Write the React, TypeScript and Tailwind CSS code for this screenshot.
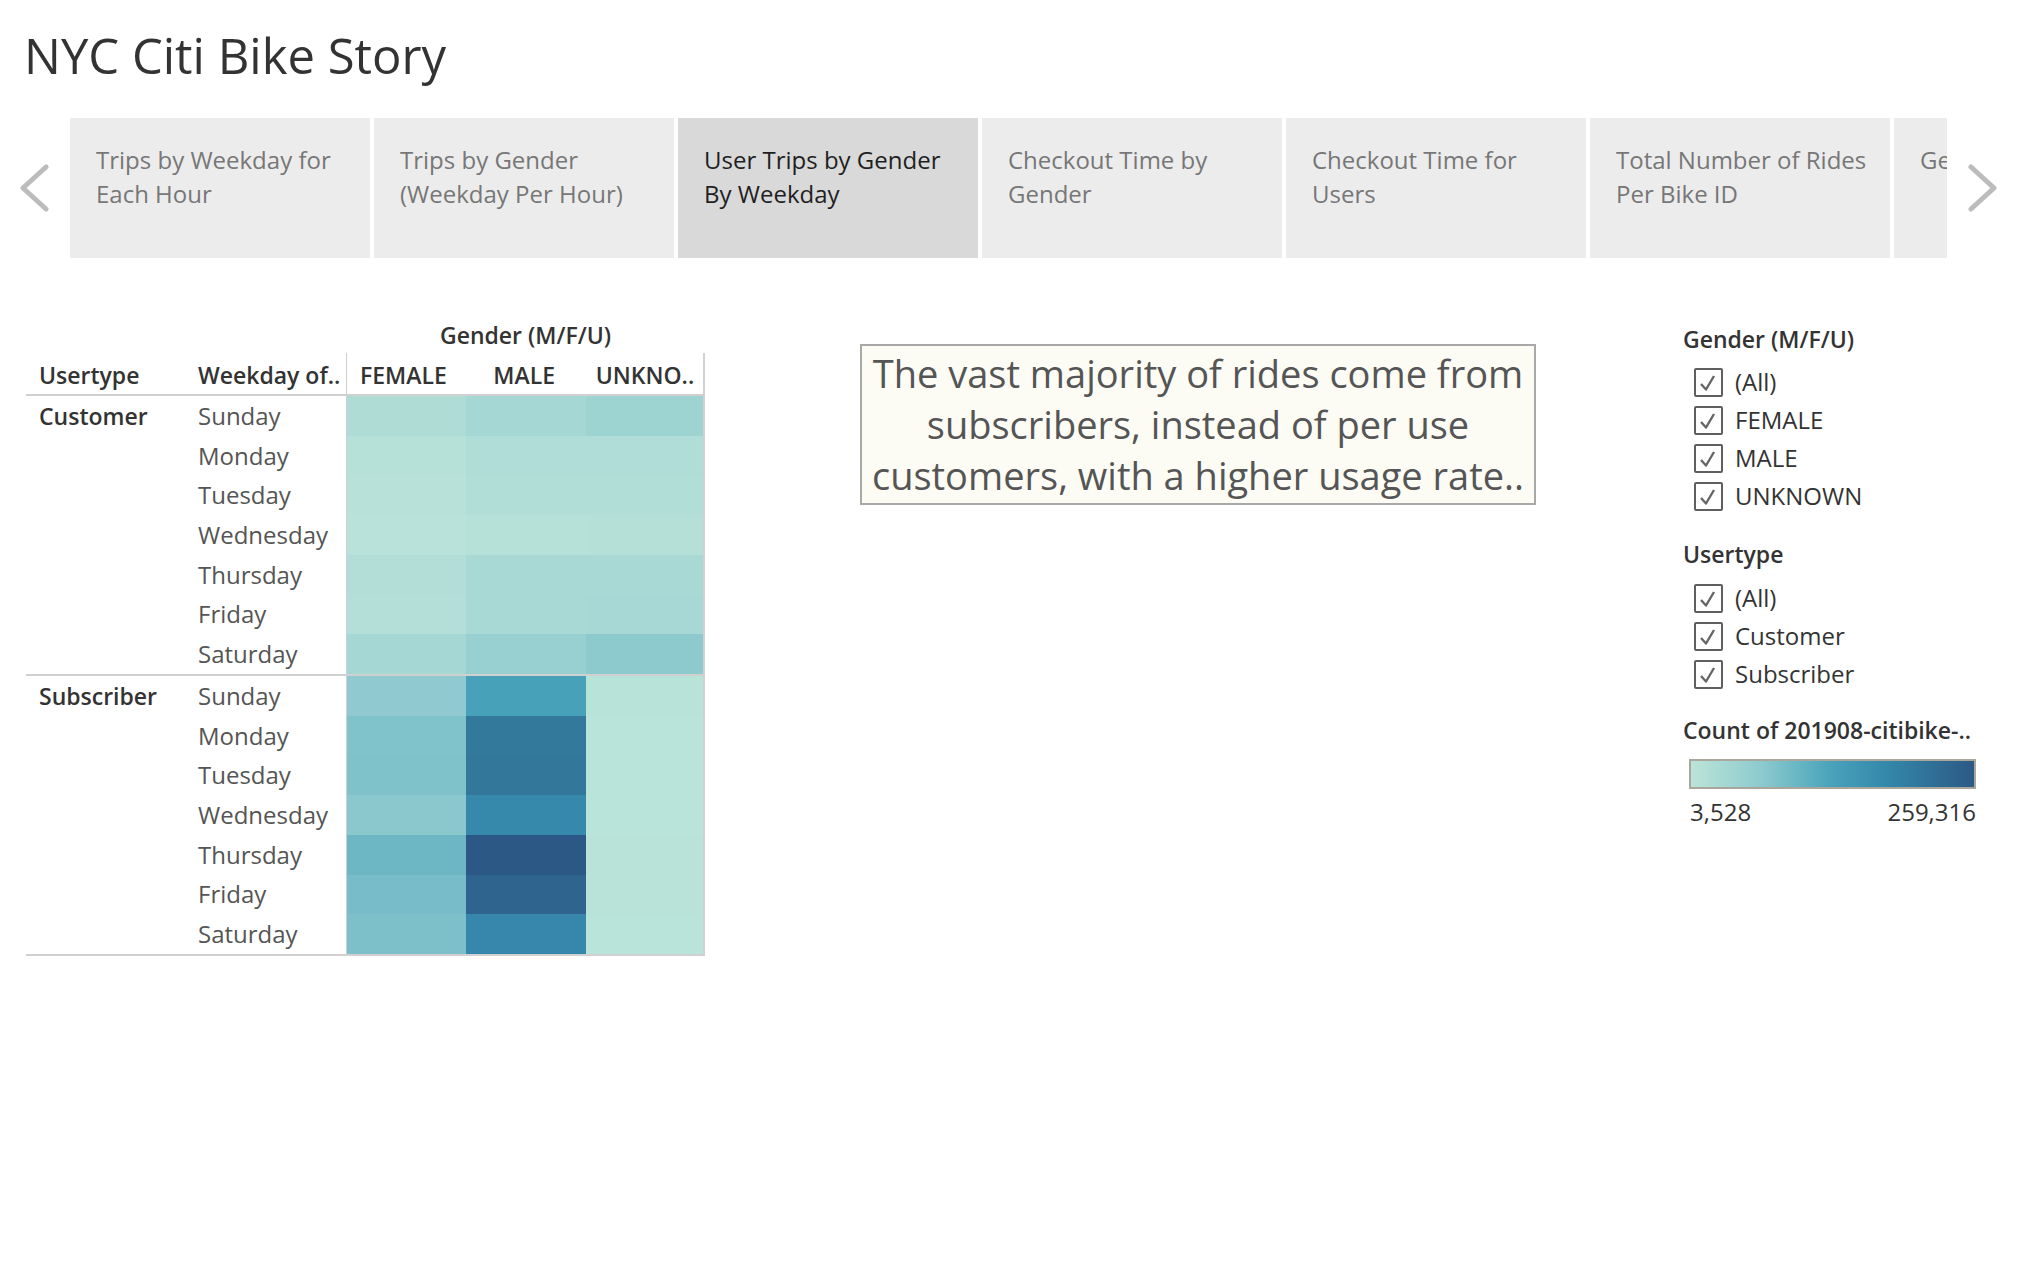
const tabs = [
  ["Trips by Weekday for", "Each Hour"],
  ["Trips by Gender", "(Weekday Per Hour)"],
  ["User Trips by Gender", "By Weekday"],
  ["Checkout Time by", "Gender"],
  ["Checkout Time for", "Users"],
  ["Total Number of Rides", "Per Bike ID"],
  ["Gender Trips", ""],
];

const days = ["Sunday", "Monday", "Tuesday", "Wednesday", "Thursday", "Friday", "Saturday"];

// colors per weekday: FEMALE, MALE, UNKNOWN
const groups: { name: string; cells: string[][] }[] = [
  {
    name: "Customer",
    cells: [
      ["#b0dcd6", "#a5d8d4", "#9dd4d2"],
      ["#b6e1d8", "#b0ddd7", "#b0ddd7"],
      ["#b8e2d9", "#b2ded8", "#b2ded8"],
      ["#b9e3da", "#b6e1d9", "#b4e0d8"],
      ["#b3ded7", "#a9d9d5", "#a8d9d5"],
      ["#b4dfd8", "#a9d9d5", "#a7d8d5"],
      ["#a5d7d4", "#98d0d1", "#8ccacd"],
    ],
  },
  {
    name: "Subscriber",
    cells: [
      ["#90cad0", "#47a1b9", "#b8e3d9"],
      ["#80c3cb", "#33799c", "#b9e4d9"],
      ["#80c2ca", "#33789b", "#b9e4d9"],
      ["#8bc8ce", "#3689aa", "#b9e4d9"],
      ["#6db7c5", "#2c5885", "#b9e3d9"],
      ["#77bcc8", "#2e648d", "#b9e3d9"],
      ["#7dc0ca", "#3787ad", "#b9e4d9"],
    ],
  },
];

function Chevron({ dir }: { dir: "left" | "right" }) {
  return (
    <svg width="29" height="48" viewBox="0 0 29 48" className="shrink-0">
      <polyline
        points={dir === "left" ? "26,3 3,24 26,45" : "3,3 26,24 3,45"}
        fill="none"
        stroke="#bcbcbc"
        strokeWidth="5"
        strokeLinecap="round"
        strokeLinejoin="round"
      />
    </svg>
  );
}

function Check({ label }: { label: string }) {
  return (
    <div className="flex h-[38px] items-center">
      <div className="ml-[11px] flex h-[29px] w-[29px] items-center justify-center rounded-[2px] border-2 border-[#5f5f5f]">
        <svg width="25" height="25" viewBox="0 0 25 25">
          <polyline points="5,14 10,19.5 18,6" fill="none" stroke="#666" strokeWidth="2.4" strokeLinejoin="round" />
        </svg>
      </div>
      <span className="ml-[12px] text-[24px] leading-[24px] text-[#333]">{label}</span>
    </div>
  );
}

export default function App() {
  return (
    <div className="h-[1270px] w-[2018px] overflow-hidden bg-white font-['Open_Sans',sans-serif] text-[#333]">
      <div className="h-[118px] pl-[24px] pt-[31px]">
        <h1 className="text-[49px] leading-[49px] text-[#333]">NYC Citi Bike Story</h1>
      </div>

      {/* story points */}
      <div className="flex h-[140px] items-center pl-[20px]">
        <Chevron dir="left" />
        <div className="ml-[21px] flex h-full w-[1877px] gap-[4px] overflow-hidden">
          {tabs.map((t, i) => (
            <div
              key={i}
              className={
                "h-full w-[300px] shrink-0 pl-[26px] pt-[25px] text-[24px] leading-[34px] whitespace-nowrap " +
                (i === 2 ? "bg-[#d9d9d9] text-[#1f1f1f]" : "bg-[#ececec] text-[#777]")
              }
            >
              <div>{t[0]}</div>
              <div>{t[1]}</div>
            </div>
          ))}
        </div>
        <div className="ml-[21px]">
          <Chevron dir="right" />
        </div>
      </div>

      <div className="flex items-start pl-[26px]">
        {/* heatmap */}
        <div className="w-[679px]">
          <div className="mt-[66px] flex">
            <div className="w-[320px]" />
            <div className="w-[359px] text-center text-[23px] leading-[23px] font-semibold text-[#333]">Gender (M/F/U)</div>
          </div>
          <div className="mt-[6px] flex h-[43px] border-b-2 border-[#d0d0d0] text-[23px] leading-[23px] font-semibold text-[#333]">
            <div className="w-[159px] pl-[13px] pt-[11px]">Usertype</div>
            <div className="w-[161px] pl-[13px] pt-[11px] whitespace-nowrap">Weekday of..</div>
            <div className="flex w-[359px] border-l border-r-2 border-[#d0d0d0]">
              <div className="w-[120px] pl-[13px] pt-[11px]">FEMALE</div>
              <div className="w-[120px] pl-[27px] pt-[11px]">MALE</div>
              <div className="w-[118px] pl-[10px] pt-[11px] whitespace-nowrap">UNKNO..</div>
            </div>
          </div>
          {groups.map((g) => (
            <div key={g.name} className="flex h-[280px] flex-col border-b-2 border-[#d0d0d0]">
              {days.map((d, r) => (
                <div key={d} className="flex min-h-0 flex-1 items-center">
                  <div className="flex h-full w-[159px] items-center pl-[13px] text-[23px] font-semibold text-[#333]">
                    {r === 0 ? g.name : ""}
                  </div>
                  <div className="flex h-full w-[161px] items-center pl-[13px] text-[24px] text-[#555]">{d}</div>
                  <div className="flex h-full w-[359px] border-l border-r-2 border-[#d0d0d0]">
                    {g.cells[r].map((c, k) => (
                      <div key={k} className={k === 2 ? "h-full w-[118px]" : "h-full w-[120px]"} style={{ backgroundColor: c }} />
                    ))}
                  </div>
                </div>
              ))}
            </div>
          ))}
        </div>

        {/* annotation */}
        <div className="ml-[155px] mt-[86px] flex h-[161px] w-[676px] flex-col items-center justify-center border-2 border-[#a8a8a8] bg-[#fcfcf5] text-center text-[38px] leading-[51px] whitespace-nowrap text-[#555]">
          <div>The vast majority of rides come from</div>
          <div>subscribers, instead of per use</div>
          <div>customers, with a higher usage rate..</div>
        </div>

        {/* legends */}
        <div className="ml-[147px] w-[320px]">
          <div className="mt-[70px] text-[23px] leading-[23px] font-semibold text-[#333]">Gender (M/F/U)</div>
          <div className="mt-[12px]">
            <Check label="(All)" />
            <Check label="FEMALE" />
            <Check label="MALE" />
            <Check label="UNKNOWN" />
          </div>
          <div className="mt-[28px] text-[23px] leading-[23px] font-semibold text-[#333]">Usertype</div>
          <div className="mt-[13px]">
            <Check label="(All)" />
            <Check label="Customer" />
            <Check label="Subscriber" />
          </div>
          <div className="mt-[26px] text-[23px] leading-[23px] font-semibold whitespace-nowrap text-[#333]">
            Count of 201908-citibike-..
          </div>
          <div className="ml-[6px] mt-[17px] h-[30px] w-[287px] border-2 border-[#aaa69c] bg-[linear-gradient(to_right,#bce4d8_0%,#8ccace_25%,#47a2ba_50%,#3387a9_70%,#2c5985_100%)]" />
          <div className="ml-[7px] mt-[11px] flex w-[286px] justify-between text-[24px] leading-[24px] text-[#333]">
            <span>3,528</span>
            <span>259,316</span>
          </div>
        </div>
      </div>
    </div>
  );
}
